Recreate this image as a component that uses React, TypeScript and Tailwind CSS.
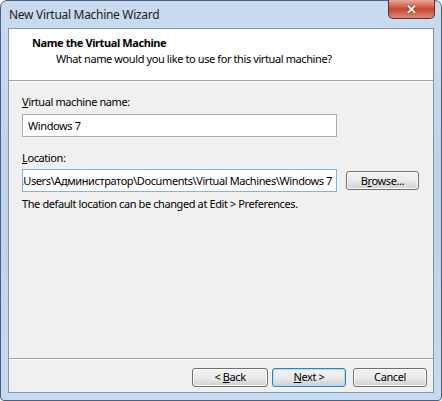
const font = { fontFamily: '"Segoe UI", "Noto Sans", sans-serif' };

const Btn = ({ children, w, primary }: { children: React.ReactNode; w: string; primary?: boolean }) => (
    <div
        className={`${w} h-[19px] flex items-center justify-center rounded-[3px] border text-[11px] text-black bg-gradient-to-b from-[#f2f2f2] via-[#ebebeb] to-[#cfcfcf] ${
            primary ? 'border-[#3c7fb1] shadow-[inset_0_0_0_1px_#a8dff7]' : 'border-[#707070] shadow-[inset_0_0_0_1px_#fbfbfb]'
        }`}
    >
        <span className="whitespace-pre">{children}</span>
    </div>
);

const App = () => {
    return (
        <div style={font} className="w-[442px] h-[401px] bg-white">
            <div className="w-[442px] h-[401px] flex flex-col rounded-t-[7px] rounded-b-[4px] border border-[#4d6079] bg-gradient-to-b from-[#c8dbf0] via-[#bcd3ec] to-[#c6daef]">
                {/* title bar */}
                <div className="h-[27px] flex items-start justify-between pl-[8px] pr-[6px]">
                    <span className="text-[12px] tracking-[-0.3px] text-[#1e1e1e] mt-[6px] leading-[16px]">New Virtual Machine Wizard</span>
                    <div className="w-[47px] h-[19px] -mt-px flex items-center justify-center rounded-b-[5px] border border-t-0 border-[#6d2a22] bg-gradient-to-b from-[#e7a99d] via-[#c9452f] to-[#d88a78]">
                        <span className="text-white font-bold text-[13px] leading-none [text-shadow:0_0_2px_#5a1208]">✕</span>
                    </div>
                </div>
                {/* client area */}
                <div className="flex-1 mx-[7px] mb-[7px] border border-[#8396b0] bg-[#f0f0f0] flex flex-col text-[11px] tracking-[-0.4px] text-black">
                    <div className="h-[52px] bg-white border-b border-[#a0a0a0] pl-[23px] pt-[6px] leading-[16px]">
                        <div className="font-bold">Name the Virtual Machine</div>
                        <div className="pl-[24px]">What name would you like to use for this virtual machine?</div>
                    </div>
                    <div className="border-t border-white flex-1 pl-[13px] pt-[12px] leading-[16px]">
                        <div>
                            <u>V</u>irtual machine name:
                        </div>
                        <div className="mt-[4px] w-[315px] h-[23px] border border-[#abadb3] bg-white flex items-center pl-[5px]">
                            Windows 7
                        </div>
                        <div className="mt-[13px]">
                            <u>L</u>ocation:
                        </div>
                        <div className="mt-[3px] flex items-center gap-[9px]">
                            <div className="w-[315px] h-[23px] border border-[#7eb4ea] bg-white flex items-center justify-end overflow-hidden pr-[4px] whitespace-nowrap">
                                C:\Users\Администратор\Documents\Virtual Machines\Windows 7
                            </div>
                            <Btn w="w-[73px]">
                                B<u>r</u>owse...
                            </Btn>
                        </div>
                        <div className="mt-[4px]">The default location can be changed at Edit &gt; Preferences.</div>
                    </div>
                    <div className="border-t border-[#a0a0a0]">
                        <div className="border-t border-white h-[33px] flex justify-end items-start pt-[8px] pr-[6px]">
                            <Btn w="w-[76px]">
                                {'< '}
                                <u>B</u>ack
                            </Btn>
                            <div className="ml-[4px]">
                                <Btn w="w-[74px]" primary>
                                    <u>N</u>ext{' >'}
                                </Btn>
                            </div>
                            <div className="ml-[7px]">
                                <Btn w="w-[74px]">Cancel</Btn>
                            </div>
                        </div>
                    </div>
                </div>
            </div>
        </div>
    );
};

export default App;
